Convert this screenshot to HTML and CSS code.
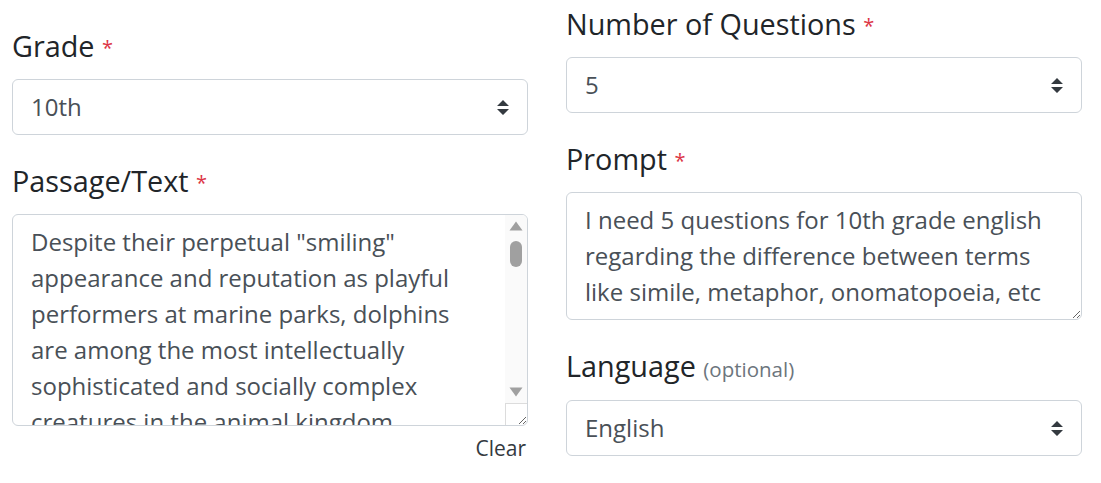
FILE: index.html
```html
<!DOCTYPE html>
<html>
<head>
<meta charset="utf-8">
<link rel="stylesheet" href="styles.css">
</head>
<body>
<div class="form">
  <div class="col col-left">
    <div class="group">
      <label class="label">Grade <span class="req">*</span></label>
      <div class="select">10th</div>
    </div>
    <div class="group">
      <label class="label">Passage/Text <span class="req">*</span></label>
      <div class="area-wrap">
        <textarea class="area area-passage">Despite their perpetual "smiling" appearance and reputation as playful performers at marine parks, dolphins are among the most intellectually sophisticated and socially complex creatures in the animal kingdom. Scientists have documented behaviors that suggest self-awareness, problem solving, and even culture passed from one generation to the next.</textarea>
        <div class="vscroll">
          <div class="sb-btn">
            <svg width="14" height="10" viewBox="0 0 14 10"><path d="M7 0.5 L13.5 9.5 H0.5 Z" fill="#a0a0a0"/></svg>
          </div>
          <div class="sb-thumb"></div>
          <div class="sb-space"></div>
          <div class="sb-btn">
            <svg width="14" height="10" viewBox="0 0 14 10"><path d="M7 9.5 L13.5 0.5 H0.5 Z" fill="#a0a0a0"/></svg>
          </div>
        </div>
        <div class="sb-corner"></div>
      </div>
      <div class="clear-row"><span class="clear">Clear</span></div>
    </div>
  </div>
  <div class="col col-right">
    <div class="group">
      <label class="label">Number of Questions <span class="req">*</span></label>
      <div class="select">5</div>
    </div>
    <div class="group">
      <label class="label">Prompt <span class="req">*</span></label>
      <textarea class="area area-prompt" rows="3">I need 5 questions for 10th grade english regarding the difference between terms like simile, metaphor, onomatopoeia, etc</textarea>
    </div>
    <div class="group">
      <label class="label">Language <span class="opt">(optional)</span></label>
      <div class="select">English</div>
    </div>
  </div>
</div>
</body>
</html>
```
FILE: styles.css
```css
html, body {
  margin: 0;
  padding: 0;
  background: #fff;
}
body {
  font-family: "Open Sans", "Liberation Sans", sans-serif;
  color: #212529;
}
.form {
  display: grid;
  grid-template-columns: 516px 516px;
  column-gap: 38px;
  padding: 0 19px 0 12px;
}
.col-left {
  padding-top: 24px;
}
.col-right {
  padding-top: 2px;
}
.group {
  margin-bottom: 24px;
}
.group:last-child {
  margin-bottom: 0;
}
.label {
  display: block;
  font-size: 28.8px;
  line-height: 43px;
  margin-bottom: 10px;
  color: #212529;
}
.col-right .group:last-child .label {
  margin-bottom: 9px;
}
.req {
  color: #dc3545;
  font-size: 20px;
  vertical-align: 2px;
}
.opt {
  color: #6c757d;
  font-size: 20.5px;
}
.select {
  box-sizing: border-box;
  height: 56px;
  border: 1px solid #ced4da;
  border-radius: 6px;
  padding: 9px 42px 9px 18px;
  font-size: 24px;
  line-height: 36px;
  color: #495057;
  background: #fff url("data:image/svg+xml,%3csvg xmlns='http://www.w3.org/2000/svg' width='4' height='5' viewBox='0 0 4 5'%3e%3cpath fill='%23343a40' d='M2 0L0 2h4zm0 5L0 3h4z'/%3e%3c/svg%3e") no-repeat right 18px center / 12px 15px;
}
.area {
  display: block;
  box-sizing: border-box;
  width: 100%;
  margin: 0;
  border: 1px solid #ced4da;
  border-radius: 6px;
  padding: 9px 18px;
  font-family: "Open Sans", "Liberation Sans", sans-serif;
  font-size: 24px;
  line-height: 36px;
  color: #495057;
  background: #fff;
  resize: vertical;
}
.area-wrap {
  position: relative;
}
.area-passage {
  height: 212px;
  overflow: hidden;
  padding-right: 40px;
}
.vscroll {
  position: absolute;
  top: 1px;
  right: 1px;
  bottom: 23px;
  width: 22px;
  background: #fafafa;
  border-top-right-radius: 5px;
  display: flex;
  flex-direction: column;
  align-items: center;
}
.sb-btn {
  height: 22px;
  width: 22px;
  display: flex;
  align-items: center;
  justify-content: center;
}
.sb-thumb {
  margin-top: 4px;
  width: 12px;
  height: 26px;
  border-radius: 6px;
  background: #a0a0a0;
}
.sb-space {
  flex: 1;
}
.sb-corner {
  position: absolute;
  right: 1px;
  bottom: 1px;
  width: 21px;
  height: 21px;
  border-left: 1px solid #dcdcdc;
  border-top: 1px solid #dcdcdc;
  border-bottom-right-radius: 5px;
}
.area-prompt {
  height: 128px;
  overflow: hidden;
}
.clear-row {
  display: flex;
  justify-content: flex-end;
  padding-top: 7px;
  padding-right: 2px;
}
.clear {
  font-size: 21px;
  line-height: 31px;
  color: #343a40;
}
```
